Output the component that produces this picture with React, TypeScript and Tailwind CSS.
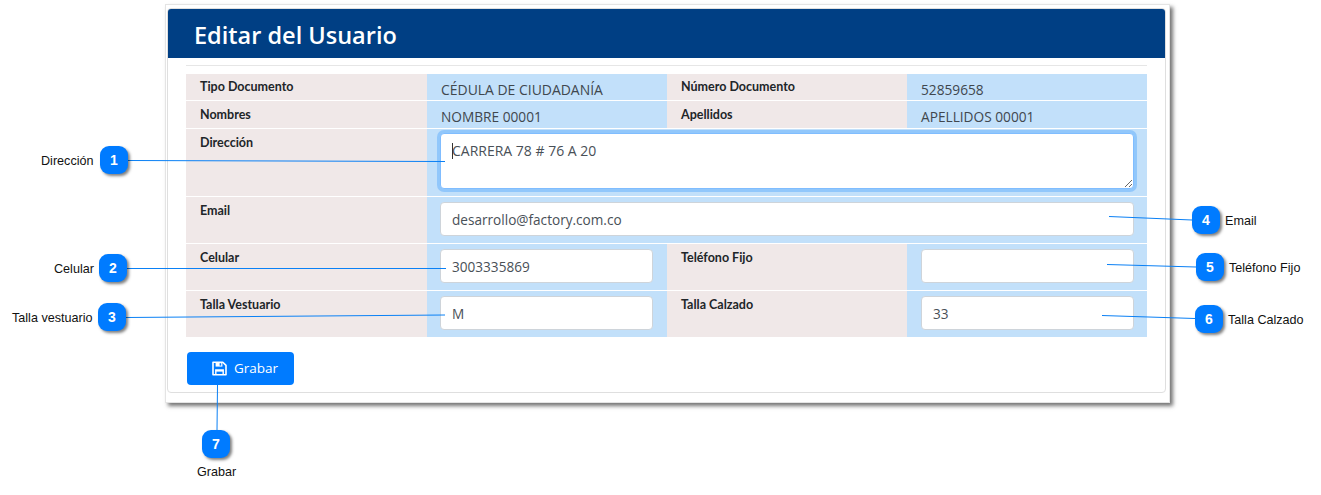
import React from 'react';

const labelCell = "bg-[#f0e8e8] pl-[14px] font-['Lato',sans-serif] text-[12.5px] leading-[18px] font-bold text-[#212529]";
const valueCell = 'h-full bg-[#c2e0fa]';
const inputClass =
  'block h-[34px] w-full rounded-[4px] border border-[#ced4da] bg-white px-[11px] text-[13.6px] text-[#495057] outline-none';

const Label = ({ text, tight }: { text: string; tight?: boolean }) => (
  <div className={`${labelCell} ${tight ? 'pt-[4px]' : 'pt-[5px]'}`}>{text}</div>
);

const Plain = ({ text, wide }: { text: string; wide?: boolean }) => (
  <div className={`${valueCell} pt-[6px] pl-[14px] ${wide ? 'text-[13.95px]' : 'text-[13.7px]'} leading-[20px] text-[#40474e]`}>{text}</div>
);

const Field = ({ value, right }: { value: string; right?: boolean }) => (
  <div className={`${valueCell} pt-[5px] ${right ? 'pr-[13px] pl-[14px]' : 'pr-[14px] pl-[13px]'}`}>
    <input readOnly value={value} className={inputClass} />
  </div>
);

// floppy disk outline, drawn to match the button icon in the picture
const SaveIcon = () => (
  <svg width="15" height="15" viewBox="0 0 15 15" className="shrink-0" fill="none">
    <path d="M1 1.2H10.8L14 4.4V13.8H1Z" stroke="#fff" strokeWidth="1.6" strokeLinejoin="round" />
    <path d="M3.6 1.2H10.4V5.6H3.6Z" fill="#fff" />
    <rect x="7.6" y="2.2" width="1.6" height="2.4" fill="#007bff" />
    <path d="M3.8 13.8V9H11.2V13.8" stroke="#fff" strokeWidth="1.4" />
    <rect x="3.8" y="9" width="7.4" height="1.6" fill="#fff" />
  </svg>
);

interface Callout {
  n: number;
  x: number;
  y: number;
  label: string;
  labelClass: string;
}

const callouts: Callout[] = [
  { n: 1, x: 100, y: 146, label: 'Dirección', labelClass: 'left-[41px] top-[152px]' },
  { n: 2, x: 99, y: 254, label: 'Celular', labelClass: 'left-[54px] top-[260px]' },
  { n: 3, x: 98, y: 303, label: 'Talla vestuario', labelClass: 'left-[12px] top-[309px]' },
  { n: 4, x: 1192, y: 206, label: 'Email', labelClass: 'left-[1225px] top-[212px]' },
  { n: 5, x: 1196, y: 253, label: 'Teléfono Fijo', labelClass: 'left-[1229px] top-[259px]' },
  { n: 6, x: 1195, y: 305, label: 'Talla Calzado', labelClass: 'left-[1228px] top-[311px]' },
  { n: 7, x: 202, y: 430, label: 'Grabar', labelClass: 'left-[197px] top-[463px]' },
];

const lines = [
  [128, 160.5, 445, 161.5],
  [127, 268.5, 446, 268.5],
  [126, 317.5, 445, 315],
  [1192, 220, 1109, 216.5],
  [1196, 267, 1107, 264.5],
  [1195, 318.5, 1102, 315.5],
  [217.5, 385, 217, 430],
];

export default function App() {
  return (
    <div className="relative h-[495px] w-[1321px] overflow-hidden bg-white font-['Open_Sans',sans-serif]">
      <div className="pt-[4px] pl-[165px]">
        <div className="h-[399px] w-[1005px] border border-[#e4e4e4] bg-white px-[1px] pt-[3px] shadow-[3px_3px_4px_rgba(0,0,0,0.55)]">
          <div className="h-[385px] w-[999px] rounded-[4px] border border-[#dfdfdf]">
            <div className="flex h-[49px] items-center rounded-t-[3px] bg-[#003f84] pt-[5px] pl-[26px] text-[23.5px] font-semibold text-white">
              Editar del Usuario
            </div>
            <div className="px-[18px] pt-[7px]">
              <div className="mb-[8px] h-[1px] bg-[#e6e6e6]" />
              <div className="grid w-[961px] grid-cols-[241px_240px_240px_240px] grid-rows-[26px_27px_67px_46px_46px_46px] gap-y-[1px]">
                <Label text="Tipo Documento" tight />
                <Plain text="CÉDULA DE CIUDADANÍA" wide />
                <Label text="Número Documento" tight />
                <Plain text="52859658" />

                <Label text="Nombres" />
                <Plain text="NOMBRE 00001" />
                <Label text="Apellidos" />
                <Plain text="APELLIDOS 00001" />

                <Label text="Dirección" />
                <div className={`${valueCell} col-span-3 pt-[4px] pr-[13px] pl-[13px]`}>
                  <div className="relative">
                    <textarea
                      readOnly
                      value="CARRERA 78 # 76 A 20"
                      className="block h-[56px] w-full rounded-[4px] border border-[#80bdff] bg-white py-[6px] pr-[12px] pl-[11px] text-[14px] leading-[21px] text-[#495057] shadow-[0_0_0_3px_rgba(0,123,255,0.25)] outline-none"
                    />
                    <div className="absolute top-[10px] left-[12px] h-[16px] w-[1px] bg-[#333]" />
                  </div>
                </div>

                <Label text="Email" />
                <div className="col-span-3">
                  <div className={`${valueCell} pt-[5px] pr-[13px] pl-[13px]`}>
                    <input readOnly value="desarrollo@factory.com.co" className={inputClass} />
                  </div>
                </div>

                <Label text="Celular" />
                <Field value="3003335869" />
                <Label text="Teléfono Fijo" />
                <Field value="" right />

                <Label text="Talla Vestuario" />
                <Field value="M" />
                <Label text="Talla Calzado" />
                <Field value="33" right />
              </div>
              <button className="mt-[15px] ml-[1px] flex h-[33px] w-[107px] items-center gap-[7px] rounded-[4px] bg-[#007bff] pl-[25px] text-[13.5px] text-white">
                <SaveIcon />
                Grabar
              </button>
            </div>
          </div>
        </div>
      </div>

      {/* callouts over the screenshot */}
      <svg className="absolute top-0 left-0 h-[495px] w-[1321px]" viewBox="0 0 1321 495" fill="none">
        {lines.map((l, i) => (
          <line key={i} x1={l[0]} y1={l[1]} x2={l[2]} y2={l[3]} stroke="#0a80f5" strokeWidth="1" />
        ))}
      </svg>
      {callouts.map(c => (
        <React.Fragment key={c.n}>
          <div
            className="absolute flex h-[28px] w-[28px] items-center justify-center rounded-[9px] bg-[#007bff] font-['Liberation_Sans',sans-serif] text-[14px] font-bold text-white shadow-[2px_2px_3px_rgba(0,0,0,0.5)]"
            style={{ left: c.x, top: c.y }}
          >
            {c.n}
          </div>
          <div className={`absolute font-['Liberation_Sans',sans-serif] text-[12.6px] leading-[18px] text-[#111] ${c.labelClass}`}>
            {c.label}
          </div>
        </React.Fragment>
      ))}
    </div>
  );
}
